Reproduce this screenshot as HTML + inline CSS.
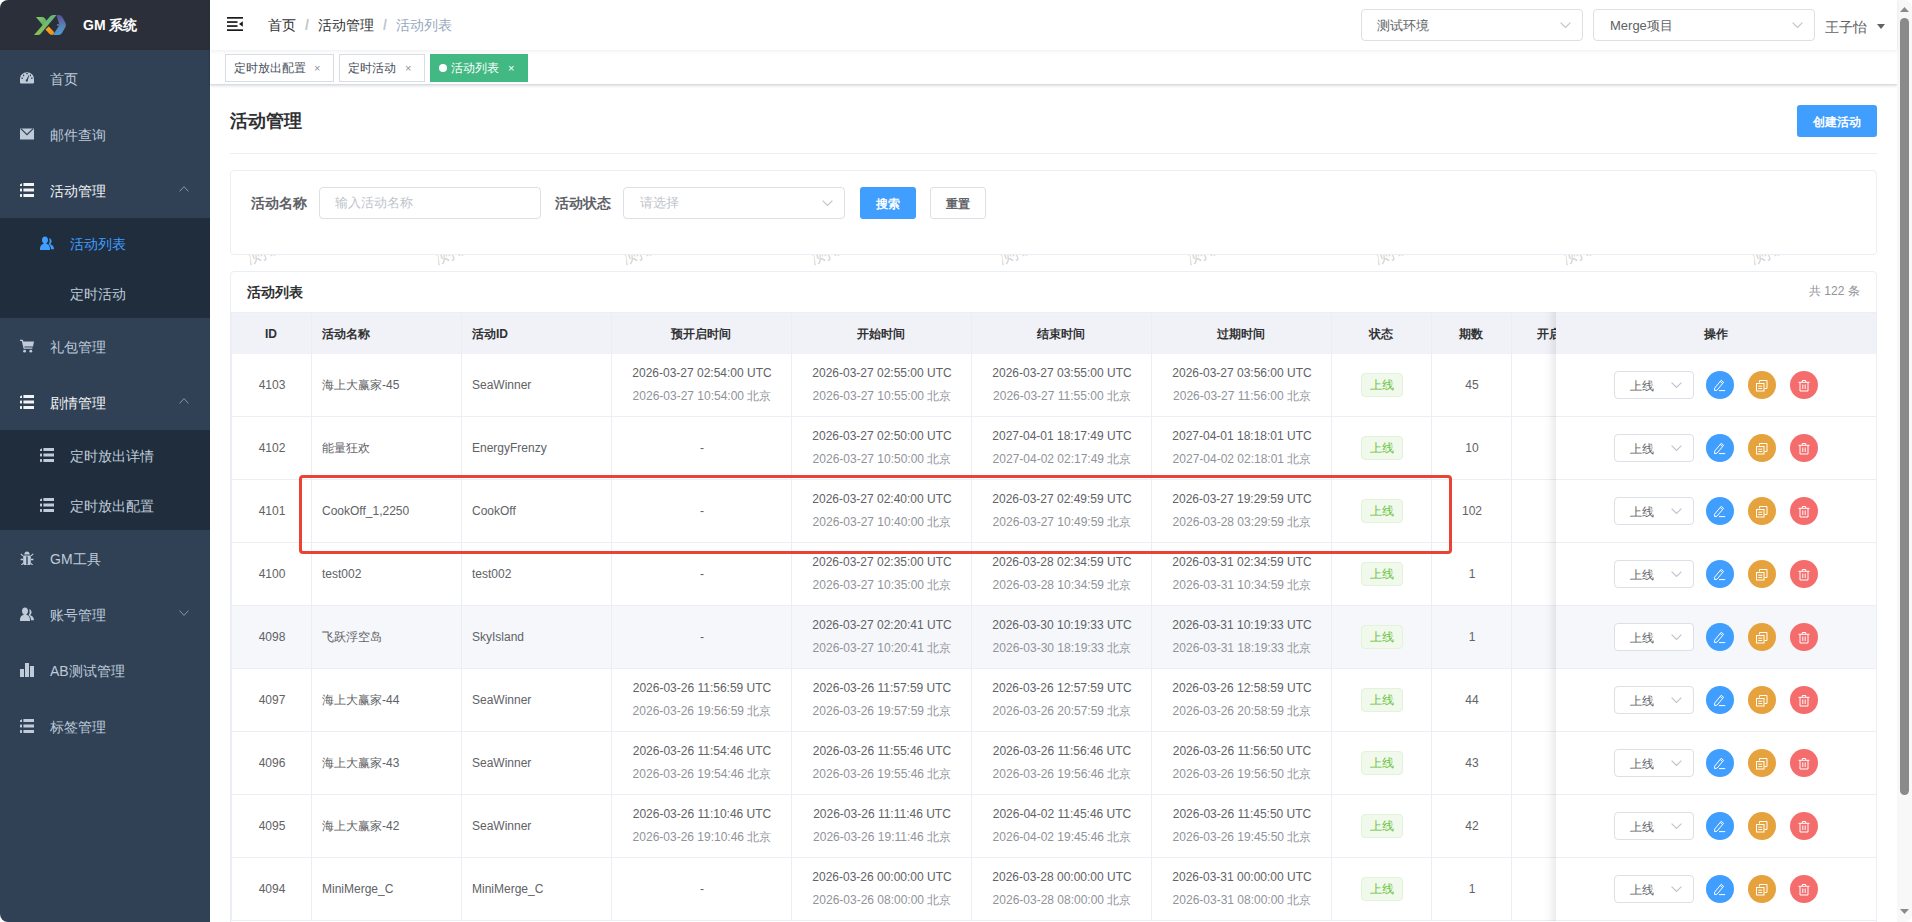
<!DOCTYPE html>
<html><head><meta charset="utf-8">
<style>
*{box-sizing:border-box;margin:0;padding:0}
html,body{width:1912px;height:922px;overflow:hidden;background:#fff}
body{font-family:"Liberation Sans",sans-serif;position:relative;color:#606266}
.abs{position:absolute}
.nw{white-space:nowrap}
#sb{position:absolute;left:0;top:0;width:210px;height:922px;background:#304156;overflow:hidden}
#logo{position:absolute;left:0;top:0;width:210px;height:50px;background:#2b2f3a}
.mi{position:absolute;left:0;width:210px;height:56px;color:#bfcbd9;font-size:14px}
.mi .tx{position:absolute;left:50px;top:1px;line-height:56px;white-space:nowrap}
.mi.sub{height:50px;background:#1f2d3d}
.mi.sub .tx{left:70px;top:1px;line-height:50px}
#nav{position:absolute;left:210px;top:0;width:1687px;height:50px;background:#fff;box-shadow:0 1px 4px rgba(0,21,41,.08);z-index:2}
#tags{position:absolute;left:210px;top:50px;width:1687px;height:35px;background:#fff;border-bottom:1px solid #d8dce5;box-shadow:0 1px 3px 0 rgba(0,0,0,.12),0 0 3px 0 rgba(0,0,0,.04)}
.tag{position:absolute;top:4px;height:28px;line-height:26px;border:1px solid #d8dce5;color:#495060;background:#fff;font-size:12px;padding-left:8px;white-space:nowrap}
.tag .x{position:absolute;top:0;font-size:11px;line-height:26px;color:#909399}
.tag.act{background:#42b983;border-color:#42b983;color:#fff}
.tag.act .x{color:#fff}
.box{position:absolute;border:1px solid #dcdfe6;border-radius:4px;background:#fff}
.card{position:absolute;border:1px solid #ebeef5;border-radius:4px;background:#fff}
.btn{position:absolute;border-radius:3px;font-size:12px;font-weight:bold;text-align:center;line-height:30px}
.th{position:absolute;top:313px;height:42px;line-height:42px;font-size:12px;font-weight:bold;color:#303133;white-space:nowrap}
.cell{position:absolute;font-size:12px;white-space:nowrap;color:#606266}
.l1{color:#606266}
.l2{color:#909399}
.tg{position:absolute;width:42px;height:24px;border:1px solid #e1f3d8;background:#f0f9eb;color:#67c23a;border-radius:4px;font-size:12px;line-height:22px;text-align:center}
.circ{position:absolute;width:28px;height:28px;border-radius:50%}
#sbar{position:absolute;left:1897px;top:0;width:15px;height:922px;background:#f8f8f8}
</style></head>
<body>

<div id="sb">
<div id="logo">
<svg class="abs" style="left:30px;top:10px" width="40" height="30" viewBox="0 0 40 30">
<defs><linearGradient id="lg1" x1="0" y1="1" x2="1" y2="0"><stop offset="0" stop-color="#8cc24a"/><stop offset="1" stop-color="#5fb487"/></linearGradient>
<linearGradient id="lg0" x1="0" y1="0" x2="1" y2="1"><stop offset="0" stop-color="#8cc95e"/><stop offset="1" stop-color="#4fa874"/></linearGradient>
<linearGradient id="lg3" x1="0" y1="0" x2="1" y2="1"><stop offset="0" stop-color="#f6b21c"/><stop offset="1" stop-color="#f0861e"/></linearGradient>
<linearGradient id="lg2" x1="0" y1="0" x2="0" y2="1"><stop offset="0" stop-color="#5a4d9c"/><stop offset="0.5" stop-color="#5a7fb0"/><stop offset="1" stop-color="#4a9ed6"/></linearGradient></defs>
<path d="M6 7 L12.5 7 Q14 7 15 8.5 L17 11.5 L13 15.5 Z" fill="url(#lg0)"/>
<path d="M15.5 19.5 L18.8 16.5 L24 22 Q24.5 22.8 23.5 24 L22.5 25 Q20.5 25 19.5 24 Z" fill="url(#lg3)"/>
<path d="M4 25 L20 6.5 Q21.3 5 23 5 L26.5 5 L10.5 24 Q9.5 25 8 25 Z" fill="url(#lg1)"/>
<path d="M26.5 5 L29 5 Q31 5 32.2 6.8 L35.5 13 Q36.3 15 35.5 17 L32 23 Q30.8 25 28.5 25 L23 25 L29.5 15 Z" fill="url(#lg2)"/>
<rect x="27" y="14.2" width="2.4" height="1.5" fill="#4a8fd0"/>
</svg>
<div class="abs nw" style="left:83px;top:16px;color:#fff;font-weight:bold;font-size:14px;line-height:18px">GM 系统</div>
</div>
<div class="mi" style="top:50px">
<svg class="abs" style="left:20px;top:21px" width="14" height="14" viewBox="0 0 14 14" fill="#bfcbd9"><path d="M7 1.2C3.1 1.2 0 4.3 0 8.2V11.2Q0 12.4 1.2 12.4H12.8Q14 12.4 14 11.2V8.2C14 4.3 10.9 1.2 7 1.2Z"/><g fill="#304156"><rect x="6.2" y="2" width="1.6" height="1.2"/><rect x="3" y="3.6" width="1.2" height="1.6"/><rect x="9.8" y="3.6" width="1.2" height="1.6"/><rect x="1.4" y="6.6" width="1.6" height="1.2"/><rect x="11" y="6.6" width="1.6" height="1.2"/><path d="M6 9.6 L8.6 4.2 L9.2 4.5 L7.6 9.8 Z"/><circle cx="6.8" cy="9.6" r="1.1"/></g></svg>
<div class="tx">首页</div>
</div>
<div class="mi" style="top:106px">
<svg class="abs" style="left:20px;top:21px" width="14" height="14" viewBox="0 0 14 14" fill="#bfcbd9"><path d="M0 1.5H14V12.5H0Z"/><path d="M0.8 1.6 L7 7.6 L13.2 1.6" fill="none" stroke="#304156" stroke-width="1.2"/></svg>
<div class="tx">邮件查询</div>
</div>
<div class="mi" style="top:162px">
<svg class="abs" style="left:20px;top:21px" width="14" height="14" viewBox="0 0 14 14" fill="#f4f4f5"><path d="M0 1.5 L2 0.2 V3 H0Z"/><rect x="3.4" y="0" width="10.6" height="3"/><rect x="0" y="5.6" width="2" height="2.8"/><rect x="3.4" y="5.5" width="10.6" height="3"/><rect x="0" y="11.1" width="2" height="2.8"/><rect x="3.4" y="11" width="10.6" height="3"/></svg>
<div class="tx" style="color:#f4f4f5">活动管理</div>
<svg class="abs" style="left:179px;top:24px" width="10" height="6" viewBox="0 0 10 6"><path d="M0.6 5.4 L5.0 0.6 L9.4 5.4" fill="none" stroke="#8b97a6" stroke-width="1"/></svg>
</div>
<div class="mi sub" style="top:218px">
<svg class="abs" style="left:40px;top:18px" width="14" height="14" viewBox="0 0 14 14" fill="#409eff"><path d="M5 0.5C3.2 0.5 2 2 2 4C2 5.6 2.8 7 4 7.6C1.6 8.2 0 10 0 12.5V14H10V12.5C10 10 8.4 8.2 6 7.6C7.2 7 8 5.6 8 4C8 2 6.8 0.5 5 0.5Z"/><path d="M9.2 2.2C10.6 2.4 11.6 3.6 11.6 5.2C11.6 6.6 10.8 7.6 9.8 8C12.2 8.6 14 10.4 14 13.2H11C11 10.6 9.8 8.8 8.4 8.2C9.2 7.4 9.6 6.2 9.6 5C9.6 4 9.4 3 9.2 2.2Z"/></svg>
<div class="tx" style="color:#409eff">活动列表</div>
</div>
<div class="mi sub" style="top:268px">
<div class="tx">定时活动</div>
</div>
<div class="mi" style="top:318px">
<svg class="abs" style="left:20px;top:21px" width="14" height="14" viewBox="0 0 14 14" fill="#bfcbd9"><path d="M0 0.8H2.8L3.4 2.4H14L13 7.6H4.2L4.5 8.6H12.4V9.8H3.6L1.8 2H0Z"/><circle cx="4.6" cy="12.2" r="1.4"/><circle cx="10.8" cy="12.2" r="1.4"/></svg>
<div class="tx">礼包管理</div>
</div>
<div class="mi" style="top:374px">
<svg class="abs" style="left:20px;top:21px" width="14" height="14" viewBox="0 0 14 14" fill="#f4f4f5"><path d="M0 1.5 L2 0.2 V3 H0Z"/><rect x="3.4" y="0" width="10.6" height="3"/><rect x="0" y="5.6" width="2" height="2.8"/><rect x="3.4" y="5.5" width="10.6" height="3"/><rect x="0" y="11.1" width="2" height="2.8"/><rect x="3.4" y="11" width="10.6" height="3"/></svg>
<div class="tx" style="color:#f4f4f5">剧情管理</div>
<svg class="abs" style="left:179px;top:24px" width="10" height="6" viewBox="0 0 10 6"><path d="M0.6 5.4 L5.0 0.6 L9.4 5.4" fill="none" stroke="#8b97a6" stroke-width="1"/></svg>
</div>
<div class="mi sub" style="top:430px">
<svg class="abs" style="left:40px;top:18px" width="14" height="14" viewBox="0 0 14 14" fill="#bfcbd9"><path d="M0 1.5 L2 0.2 V3 H0Z"/><rect x="3.4" y="0" width="10.6" height="3"/><rect x="0" y="5.6" width="2" height="2.8"/><rect x="3.4" y="5.5" width="10.6" height="3"/><rect x="0" y="11.1" width="2" height="2.8"/><rect x="3.4" y="11" width="10.6" height="3"/></svg>
<div class="tx">定时放出详情</div>
</div>
<div class="mi sub" style="top:480px">
<svg class="abs" style="left:40px;top:18px" width="14" height="14" viewBox="0 0 14 14" fill="#bfcbd9"><path d="M0 1.5 L2 0.2 V3 H0Z"/><rect x="3.4" y="0" width="10.6" height="3"/><rect x="0" y="5.6" width="2" height="2.8"/><rect x="3.4" y="5.5" width="10.6" height="3"/><rect x="0" y="11.1" width="2" height="2.8"/><rect x="3.4" y="11" width="10.6" height="3"/></svg>
<div class="tx">定时放出配置</div>
</div>
<div class="mi" style="top:530px">
<svg class="abs" style="left:20px;top:21px" width="14" height="14" viewBox="0 0 14 14" fill="#bfcbd9"><path d="M4.2 3.6C4.4 1.6 5.6 0.6 7 0.6C8.4 0.6 9.6 1.6 9.8 3.6Z"/><path d="M3.2 4.4H10.8V12.4C10.8 13.2 10 14 9.2 14H4.8C4 14 3.2 13.2 3.2 12.4Z"/><rect x="6.3" y="5.4" width="1.4" height="8.2" fill="#304156"/><path d="M0.6 7.8H3.2V9.2H0.6ZM10.8 7.8H13.4V9.2H10.8Z"/><path d="M1.2 2.4L3.4 4.4L2.6 5.2L0.4 3.2ZM12.8 2.4L10.6 4.4L11.4 5.2L13.6 3.2Z"/><path d="M1 13.6L3.4 11.6L3.6 12.8L1.8 14.4ZM13 13.6L10.6 11.6L10.4 12.8L12.2 14.4Z"/></svg>
<div class="tx">GM工具</div>
</div>
<div class="mi" style="top:586px">
<svg class="abs" style="left:20px;top:21px" width="14" height="14" viewBox="0 0 14 14" fill="#bfcbd9"><path d="M5 0.5C3.2 0.5 2 2 2 4C2 5.6 2.8 7 4 7.6C1.6 8.2 0 10 0 12.5V14H10V12.5C10 10 8.4 8.2 6 7.6C7.2 7 8 5.6 8 4C8 2 6.8 0.5 5 0.5Z"/><path d="M9.2 2.2C10.6 2.4 11.6 3.6 11.6 5.2C11.6 6.6 10.8 7.6 9.8 8C12.2 8.6 14 10.4 14 13.2H11C11 10.6 9.8 8.8 8.4 8.2C9.2 7.4 9.6 6.2 9.6 5C9.6 4 9.4 3 9.2 2.2Z"/></svg>
<div class="tx">账号管理</div>
<svg class="abs" style="left:179px;top:24px" width="10" height="6" viewBox="0 0 10 6"><path d="M0.6 0.6 L5.0 5.4 L9.4 0.6" fill="none" stroke="#8b97a6" stroke-width="1"/></svg>
</div>
<div class="mi" style="top:642px">
<svg class="abs" style="left:20px;top:21px" width="14" height="14" viewBox="0 0 14 14" fill="#bfcbd9"><rect x="0" y="6" width="4" height="8"/><rect x="5" y="0" width="4" height="14"/><rect x="10" y="3" width="4" height="11"/></svg>
<div class="tx">AB测试管理</div>
</div>
<div class="mi" style="top:698px">
<svg class="abs" style="left:20px;top:21px" width="14" height="14" viewBox="0 0 14 14" fill="#bfcbd9"><path d="M0 1.5 L2 0.2 V3 H0Z"/><rect x="3.4" y="0" width="10.6" height="3"/><rect x="0" y="5.6" width="2" height="2.8"/><rect x="3.4" y="5.5" width="10.6" height="3"/><rect x="0" y="11.1" width="2" height="2.8"/><rect x="3.4" y="11" width="10.6" height="3"/></svg>
<div class="tx">标签管理</div>
</div>
</div>
<div id="nav">
<svg class="abs" style="left:17px;top:17px" width="16" height="14" viewBox="0 0 16 14" fill="#1a1a1a">
<rect x="0" y="0" width="16" height="1.7"/><rect x="0" y="4.2" width="10.5" height="1.7"/><rect x="0" y="8.2" width="10.5" height="1.7"/><rect x="0" y="12.3" width="16" height="1.7"/>
<path d="M15.8 4.2V9.8L12 7Z"/></svg>
<div class="abs nw" style="left:58px;top:16px;font-size:14px;line-height:18px;color:#303133">首页<span style="color:#c0c4cc;margin:0 9px 0 9px;font-weight:bold">/</span>活动管理<span style="color:#c0c4cc;margin:0 9px;font-weight:bold">/</span><span style="color:#97a8be">活动列表</span></div>
</div>
<div class="abs" style="left:0;top:0;z-index:3">
<div class="box" style="left:1361px;top:9px;width:222px;height:32px"></div>
<div class="abs nw" style="left:1377px;top:18px;font-size:13px;line-height:16px;color:#606266">测试环境</div>
<svg class="abs" style="left:1560px;top:22px" width="11" height="6" viewBox="0 0 11 6"><path d="M0.6 0.6 L5.5 5.4 L10.4 0.6" fill="none" stroke="#c0c4cc" stroke-width="1.2"/></svg>
<div class="box" style="left:1593px;top:9px;width:222px;height:32px"></div>
<div class="abs nw" style="left:1610px;top:18px;font-size:13px;line-height:16px;color:#606266">Merge项目</div>
<svg class="abs" style="left:1792px;top:22px" width="11" height="6" viewBox="0 0 11 6"><path d="M0.6 0.6 L5.5 5.4 L10.4 0.6" fill="none" stroke="#c0c4cc" stroke-width="1.2"/></svg>
<div class="abs nw" style="left:1825px;top:18px;font-size:14px;line-height:18px;color:#606266">王子怡</div>
<svg class="abs" style="left:1877px;top:24px" width="8" height="5" viewBox="0 0 8 5"><path d="M0 0H8L4 5Z" fill="#606266"/></svg>
</div>
<div id="tags">
<div class="tag" style="left:15px;width:109px">定时放出配置<span class="x" style="left:88px">×</span></div>
<div class="tag" style="left:129px;width:86px">定时活动<span class="x" style="left:65px">×</span></div>
<div class="tag act" style="left:220px;width:98px;padding-left:0"><span class="abs" style="left:8px;top:9px;width:8px;height:8px;border-radius:50%;background:#fff"></span><span class="abs" style="left:20px;top:0">活动列表</span><span class="x" style="left:77px">×</span></div>
</div>
<div class="abs nw" style="left:230px;top:109px;font-size:18px;line-height:24px;font-weight:bold;color:#303133">活动管理</div>
<div class="btn" style="left:1797px;top:105px;width:80px;height:32px;background:#409eff;color:#fff;line-height:34px">创建活动</div>
<div class="abs" style="left:230px;top:153px;width:1647px;height:1px;background:#ebeef5"></div>
<div class="abs nw" style="left:243px;top:247px;font-size:20px;line-height:22px;color:rgba(0,0,0,.18);transform:rotate(-20deg);transform-origin:0 0">测试</div>
<div class="abs nw" style="left:431px;top:247px;font-size:20px;line-height:22px;color:rgba(0,0,0,.18);transform:rotate(-20deg);transform-origin:0 0">测试</div>
<div class="abs nw" style="left:619px;top:247px;font-size:20px;line-height:22px;color:rgba(0,0,0,.18);transform:rotate(-20deg);transform-origin:0 0">测试</div>
<div class="abs nw" style="left:807px;top:247px;font-size:20px;line-height:22px;color:rgba(0,0,0,.18);transform:rotate(-20deg);transform-origin:0 0">测试</div>
<div class="abs nw" style="left:995px;top:247px;font-size:20px;line-height:22px;color:rgba(0,0,0,.18);transform:rotate(-20deg);transform-origin:0 0">测试</div>
<div class="abs nw" style="left:1183px;top:247px;font-size:20px;line-height:22px;color:rgba(0,0,0,.18);transform:rotate(-20deg);transform-origin:0 0">测试</div>
<div class="abs nw" style="left:1371px;top:247px;font-size:20px;line-height:22px;color:rgba(0,0,0,.18);transform:rotate(-20deg);transform-origin:0 0">测试</div>
<div class="abs nw" style="left:1559px;top:247px;font-size:20px;line-height:22px;color:rgba(0,0,0,.18);transform:rotate(-20deg);transform-origin:0 0">测试</div>
<div class="abs nw" style="left:1747px;top:247px;font-size:20px;line-height:22px;color:rgba(0,0,0,.18);transform:rotate(-20deg);transform-origin:0 0">测试</div>
<div class="card" style="left:230px;top:170px;width:1647px;height:85px"></div>
<div class="abs nw" style="left:251px;top:195px;font-size:14px;line-height:16px;font-weight:bold;color:#606266">活动名称</div>
<div class="box" style="left:319px;top:187px;width:222px;height:32px"></div>
<div class="abs nw" style="left:335px;top:196px;font-size:13px;line-height:14px;color:#c0c4cc">输入活动名称</div>
<div class="abs nw" style="left:555px;top:195px;font-size:14px;line-height:16px;font-weight:bold;color:#606266">活动状态</div>
<div class="box" style="left:623px;top:187px;width:222px;height:32px"></div>
<div class="abs nw" style="left:640px;top:196px;font-size:13px;line-height:14px;color:#c0c4cc">请选择</div>
<svg class="abs" style="left:822px;top:200px" width="11" height="6" viewBox="0 0 11 6"><path d="M0.6 0.6 L5.5 5.4 L10.4 0.6" fill="none" stroke="#c0c4cc" stroke-width="1.2"/></svg>
<div class="btn" style="left:860px;top:187px;width:56px;height:32px;background:#409eff;color:#fff;line-height:34px">搜索</div>
<div class="btn" style="left:930px;top:187px;width:56px;height:32px;background:#fff;border:1px solid #dcdfe6;color:#606266;line-height:32px">重置</div>
<div class="card" style="left:230px;top:271px;width:1647px;height:700px"></div>
<div class="abs nw" style="left:247px;top:284px;font-size:14px;line-height:16px;font-weight:bold;color:#303133">活动列表</div>
<div class="abs nw" style="left:1809px;top:283px;font-size:12px;line-height:16px;color:#909399">共 122 条</div>
<div class="abs" style="left:231px;top:312px;width:1645px;height:42px;background:#f0f2f7;border-top:1px solid #ebeef5"></div>
<div class="abs" style="left:231px;top:416px;width:1645px;height:1px;background:#ebeef5"></div>
<div class="abs" style="left:231px;top:479px;width:1645px;height:1px;background:#ebeef5"></div>
<div class="abs" style="left:231px;top:542px;width:1645px;height:1px;background:#ebeef5"></div>
<div class="abs" style="left:231px;top:605px;width:1645px;height:1px;background:#ebeef5"></div>
<div class="abs" style="left:231px;top:606px;width:1645px;height:62px;background:#f5f7fa"></div>
<div class="abs" style="left:231px;top:668px;width:1645px;height:1px;background:#ebeef5"></div>
<div class="abs" style="left:231px;top:731px;width:1645px;height:1px;background:#ebeef5"></div>
<div class="abs" style="left:231px;top:794px;width:1645px;height:1px;background:#ebeef5"></div>
<div class="abs" style="left:231px;top:857px;width:1645px;height:1px;background:#ebeef5"></div>
<div class="abs" style="left:231px;top:920px;width:1645px;height:1px;background:#ebeef5"></div>
<div class="abs" style="left:231px;top:312px;width:1px;height:609px;background:#ebeef5"></div>
<div class="abs" style="left:311px;top:312px;width:1px;height:609px;background:#ebeef5"></div>
<div class="abs" style="left:461px;top:312px;width:1px;height:609px;background:#ebeef5"></div>
<div class="abs" style="left:611px;top:312px;width:1px;height:609px;background:#ebeef5"></div>
<div class="abs" style="left:791px;top:312px;width:1px;height:609px;background:#ebeef5"></div>
<div class="abs" style="left:971px;top:312px;width:1px;height:609px;background:#ebeef5"></div>
<div class="abs" style="left:1151px;top:312px;width:1px;height:609px;background:#ebeef5"></div>
<div class="abs" style="left:1331px;top:312px;width:1px;height:609px;background:#ebeef5"></div>
<div class="abs" style="left:1431px;top:312px;width:1px;height:609px;background:#ebeef5"></div>
<div class="abs" style="left:1511px;top:312px;width:1px;height:609px;background:#ebeef5"></div>
<div class="th" style="left:231px;width:80px;text-align:center">ID</div>
<div class="th" style="left:322px">活动名称</div>
<div class="th" style="left:472px">活动ID</div>
<div class="th" style="left:611px;width:180px;text-align:center">预开启时间</div>
<div class="th" style="left:791px;width:180px;text-align:center">开始时间</div>
<div class="th" style="left:971px;width:180px;text-align:center">结束时间</div>
<div class="th" style="left:1151px;width:180px;text-align:center">过期时间</div>
<div class="th" style="left:1331px;width:100px;text-align:center">状态</div>
<div class="th" style="left:1431px;width:80px;text-align:center">期数</div>
<div class="th" style="left:1537px">开启时间</div>
<div class="cell" style="left:232px;top:354px;width:80px;line-height:62px;text-align:center">4103</div>
<div class="cell" style="left:322px;top:354px;line-height:62px">海上大赢家-45</div>
<div class="cell" style="left:472px;top:354px;line-height:62px">SeaWinner</div>
<div class="cell l1" style="left:612px;top:362px;width:180px;line-height:23px;text-align:center">2026-03-27 02:54:00 UTC</div>
<div class="cell l2" style="left:612px;top:385px;width:180px;line-height:23px;text-align:center">2026-03-27 10:54:00 北京</div>
<div class="cell l1" style="left:792px;top:362px;width:180px;line-height:23px;text-align:center">2026-03-27 02:55:00 UTC</div>
<div class="cell l2" style="left:792px;top:385px;width:180px;line-height:23px;text-align:center">2026-03-27 10:55:00 北京</div>
<div class="cell l1" style="left:972px;top:362px;width:180px;line-height:23px;text-align:center">2026-03-27 03:55:00 UTC</div>
<div class="cell l2" style="left:972px;top:385px;width:180px;line-height:23px;text-align:center">2026-03-27 11:55:00 北京</div>
<div class="cell l1" style="left:1152px;top:362px;width:180px;line-height:23px;text-align:center">2026-03-27 03:56:00 UTC</div>
<div class="cell l2" style="left:1152px;top:385px;width:180px;line-height:23px;text-align:center">2026-03-27 11:56:00 北京</div>
<div class="tg" style="left:1361px;top:373px">上线</div>
<div class="cell" style="left:1432px;top:354px;width:80px;line-height:62px;text-align:center">45</div>
<div class="cell" style="left:232px;top:417px;width:80px;line-height:62px;text-align:center">4102</div>
<div class="cell" style="left:322px;top:417px;line-height:62px">能量狂欢</div>
<div class="cell" style="left:472px;top:417px;line-height:62px">EnergyFrenzy</div>
<div class="cell" style="left:612px;top:417px;width:180px;height:62px;line-height:62px;text-align:center">-</div>
<div class="cell l1" style="left:792px;top:425px;width:180px;line-height:23px;text-align:center">2026-03-27 02:50:00 UTC</div>
<div class="cell l2" style="left:792px;top:448px;width:180px;line-height:23px;text-align:center">2026-03-27 10:50:00 北京</div>
<div class="cell l1" style="left:972px;top:425px;width:180px;line-height:23px;text-align:center">2027-04-01 18:17:49 UTC</div>
<div class="cell l2" style="left:972px;top:448px;width:180px;line-height:23px;text-align:center">2027-04-02 02:17:49 北京</div>
<div class="cell l1" style="left:1152px;top:425px;width:180px;line-height:23px;text-align:center">2027-04-01 18:18:01 UTC</div>
<div class="cell l2" style="left:1152px;top:448px;width:180px;line-height:23px;text-align:center">2027-04-02 02:18:01 北京</div>
<div class="tg" style="left:1361px;top:436px">上线</div>
<div class="cell" style="left:1432px;top:417px;width:80px;line-height:62px;text-align:center">10</div>
<div class="cell" style="left:232px;top:480px;width:80px;line-height:62px;text-align:center">4101</div>
<div class="cell" style="left:322px;top:480px;line-height:62px">CookOff_1,2250</div>
<div class="cell" style="left:472px;top:480px;line-height:62px">CookOff</div>
<div class="cell" style="left:612px;top:480px;width:180px;height:62px;line-height:62px;text-align:center">-</div>
<div class="cell l1" style="left:792px;top:488px;width:180px;line-height:23px;text-align:center">2026-03-27 02:40:00 UTC</div>
<div class="cell l2" style="left:792px;top:511px;width:180px;line-height:23px;text-align:center">2026-03-27 10:40:00 北京</div>
<div class="cell l1" style="left:972px;top:488px;width:180px;line-height:23px;text-align:center">2026-03-27 02:49:59 UTC</div>
<div class="cell l2" style="left:972px;top:511px;width:180px;line-height:23px;text-align:center">2026-03-27 10:49:59 北京</div>
<div class="cell l1" style="left:1152px;top:488px;width:180px;line-height:23px;text-align:center">2026-03-27 19:29:59 UTC</div>
<div class="cell l2" style="left:1152px;top:511px;width:180px;line-height:23px;text-align:center">2026-03-28 03:29:59 北京</div>
<div class="tg" style="left:1361px;top:499px">上线</div>
<div class="cell" style="left:1432px;top:480px;width:80px;line-height:62px;text-align:center">102</div>
<div class="cell" style="left:232px;top:543px;width:80px;line-height:62px;text-align:center">4100</div>
<div class="cell" style="left:322px;top:543px;line-height:62px">test002</div>
<div class="cell" style="left:472px;top:543px;line-height:62px">test002</div>
<div class="cell" style="left:612px;top:543px;width:180px;height:62px;line-height:62px;text-align:center">-</div>
<div class="cell l1" style="left:792px;top:551px;width:180px;line-height:23px;text-align:center">2026-03-27 02:35:00 UTC</div>
<div class="cell l2" style="left:792px;top:574px;width:180px;line-height:23px;text-align:center">2026-03-27 10:35:00 北京</div>
<div class="cell l1" style="left:972px;top:551px;width:180px;line-height:23px;text-align:center">2026-03-28 02:34:59 UTC</div>
<div class="cell l2" style="left:972px;top:574px;width:180px;line-height:23px;text-align:center">2026-03-28 10:34:59 北京</div>
<div class="cell l1" style="left:1152px;top:551px;width:180px;line-height:23px;text-align:center">2026-03-31 02:34:59 UTC</div>
<div class="cell l2" style="left:1152px;top:574px;width:180px;line-height:23px;text-align:center">2026-03-31 10:34:59 北京</div>
<div class="tg" style="left:1361px;top:562px">上线</div>
<div class="cell" style="left:1432px;top:543px;width:80px;line-height:62px;text-align:center">1</div>
<div class="cell" style="left:232px;top:606px;width:80px;line-height:62px;text-align:center">4098</div>
<div class="cell" style="left:322px;top:606px;line-height:62px">飞跃浮空岛</div>
<div class="cell" style="left:472px;top:606px;line-height:62px">SkyIsland</div>
<div class="cell" style="left:612px;top:606px;width:180px;height:62px;line-height:62px;text-align:center">-</div>
<div class="cell l1" style="left:792px;top:614px;width:180px;line-height:23px;text-align:center">2026-03-27 02:20:41 UTC</div>
<div class="cell l2" style="left:792px;top:637px;width:180px;line-height:23px;text-align:center">2026-03-27 10:20:41 北京</div>
<div class="cell l1" style="left:972px;top:614px;width:180px;line-height:23px;text-align:center">2026-03-30 10:19:33 UTC</div>
<div class="cell l2" style="left:972px;top:637px;width:180px;line-height:23px;text-align:center">2026-03-30 18:19:33 北京</div>
<div class="cell l1" style="left:1152px;top:614px;width:180px;line-height:23px;text-align:center">2026-03-31 10:19:33 UTC</div>
<div class="cell l2" style="left:1152px;top:637px;width:180px;line-height:23px;text-align:center">2026-03-31 18:19:33 北京</div>
<div class="tg" style="left:1361px;top:625px">上线</div>
<div class="cell" style="left:1432px;top:606px;width:80px;line-height:62px;text-align:center">1</div>
<div class="cell" style="left:232px;top:669px;width:80px;line-height:62px;text-align:center">4097</div>
<div class="cell" style="left:322px;top:669px;line-height:62px">海上大赢家-44</div>
<div class="cell" style="left:472px;top:669px;line-height:62px">SeaWinner</div>
<div class="cell l1" style="left:612px;top:677px;width:180px;line-height:23px;text-align:center">2026-03-26 11:56:59 UTC</div>
<div class="cell l2" style="left:612px;top:700px;width:180px;line-height:23px;text-align:center">2026-03-26 19:56:59 北京</div>
<div class="cell l1" style="left:792px;top:677px;width:180px;line-height:23px;text-align:center">2026-03-26 11:57:59 UTC</div>
<div class="cell l2" style="left:792px;top:700px;width:180px;line-height:23px;text-align:center">2026-03-26 19:57:59 北京</div>
<div class="cell l1" style="left:972px;top:677px;width:180px;line-height:23px;text-align:center">2026-03-26 12:57:59 UTC</div>
<div class="cell l2" style="left:972px;top:700px;width:180px;line-height:23px;text-align:center">2026-03-26 20:57:59 北京</div>
<div class="cell l1" style="left:1152px;top:677px;width:180px;line-height:23px;text-align:center">2026-03-26 12:58:59 UTC</div>
<div class="cell l2" style="left:1152px;top:700px;width:180px;line-height:23px;text-align:center">2026-03-26 20:58:59 北京</div>
<div class="tg" style="left:1361px;top:688px">上线</div>
<div class="cell" style="left:1432px;top:669px;width:80px;line-height:62px;text-align:center">44</div>
<div class="cell" style="left:232px;top:732px;width:80px;line-height:62px;text-align:center">4096</div>
<div class="cell" style="left:322px;top:732px;line-height:62px">海上大赢家-43</div>
<div class="cell" style="left:472px;top:732px;line-height:62px">SeaWinner</div>
<div class="cell l1" style="left:612px;top:740px;width:180px;line-height:23px;text-align:center">2026-03-26 11:54:46 UTC</div>
<div class="cell l2" style="left:612px;top:763px;width:180px;line-height:23px;text-align:center">2026-03-26 19:54:46 北京</div>
<div class="cell l1" style="left:792px;top:740px;width:180px;line-height:23px;text-align:center">2026-03-26 11:55:46 UTC</div>
<div class="cell l2" style="left:792px;top:763px;width:180px;line-height:23px;text-align:center">2026-03-26 19:55:46 北京</div>
<div class="cell l1" style="left:972px;top:740px;width:180px;line-height:23px;text-align:center">2026-03-26 11:56:46 UTC</div>
<div class="cell l2" style="left:972px;top:763px;width:180px;line-height:23px;text-align:center">2026-03-26 19:56:46 北京</div>
<div class="cell l1" style="left:1152px;top:740px;width:180px;line-height:23px;text-align:center">2026-03-26 11:56:50 UTC</div>
<div class="cell l2" style="left:1152px;top:763px;width:180px;line-height:23px;text-align:center">2026-03-26 19:56:50 北京</div>
<div class="tg" style="left:1361px;top:751px">上线</div>
<div class="cell" style="left:1432px;top:732px;width:80px;line-height:62px;text-align:center">43</div>
<div class="cell" style="left:232px;top:795px;width:80px;line-height:62px;text-align:center">4095</div>
<div class="cell" style="left:322px;top:795px;line-height:62px">海上大赢家-42</div>
<div class="cell" style="left:472px;top:795px;line-height:62px">SeaWinner</div>
<div class="cell l1" style="left:612px;top:803px;width:180px;line-height:23px;text-align:center">2026-03-26 11:10:46 UTC</div>
<div class="cell l2" style="left:612px;top:826px;width:180px;line-height:23px;text-align:center">2026-03-26 19:10:46 北京</div>
<div class="cell l1" style="left:792px;top:803px;width:180px;line-height:23px;text-align:center">2026-03-26 11:11:46 UTC</div>
<div class="cell l2" style="left:792px;top:826px;width:180px;line-height:23px;text-align:center">2026-03-26 19:11:46 北京</div>
<div class="cell l1" style="left:972px;top:803px;width:180px;line-height:23px;text-align:center">2026-04-02 11:45:46 UTC</div>
<div class="cell l2" style="left:972px;top:826px;width:180px;line-height:23px;text-align:center">2026-04-02 19:45:46 北京</div>
<div class="cell l1" style="left:1152px;top:803px;width:180px;line-height:23px;text-align:center">2026-03-26 11:45:50 UTC</div>
<div class="cell l2" style="left:1152px;top:826px;width:180px;line-height:23px;text-align:center">2026-03-26 19:45:50 北京</div>
<div class="tg" style="left:1361px;top:814px">上线</div>
<div class="cell" style="left:1432px;top:795px;width:80px;line-height:62px;text-align:center">42</div>
<div class="cell" style="left:232px;top:858px;width:80px;line-height:62px;text-align:center">4094</div>
<div class="cell" style="left:322px;top:858px;line-height:62px">MiniMerge_C</div>
<div class="cell" style="left:472px;top:858px;line-height:62px">MiniMerge_C</div>
<div class="cell" style="left:612px;top:858px;width:180px;height:62px;line-height:62px;text-align:center">-</div>
<div class="cell l1" style="left:792px;top:866px;width:180px;line-height:23px;text-align:center">2026-03-26 00:00:00 UTC</div>
<div class="cell l2" style="left:792px;top:889px;width:180px;line-height:23px;text-align:center">2026-03-26 08:00:00 北京</div>
<div class="cell l1" style="left:972px;top:866px;width:180px;line-height:23px;text-align:center">2026-03-28 00:00:00 UTC</div>
<div class="cell l2" style="left:972px;top:889px;width:180px;line-height:23px;text-align:center">2026-03-28 08:00:00 北京</div>
<div class="cell l1" style="left:1152px;top:866px;width:180px;line-height:23px;text-align:center">2026-03-31 00:00:00 UTC</div>
<div class="cell l2" style="left:1152px;top:889px;width:180px;line-height:23px;text-align:center">2026-03-31 08:00:00 北京</div>
<div class="tg" style="left:1361px;top:877px">上线</div>
<div class="cell" style="left:1432px;top:858px;width:80px;line-height:62px;text-align:center">1</div>
<div class="abs" style="left:1520px;top:312px;width:36px;height:609px;overflow:hidden"><div class="abs" style="left:36px;top:-20px;width:320px;height:649px;box-shadow:-6px 0 10px -4px rgba(0,0,0,.12)"></div></div>
<div class="abs" style="left:1556px;top:312px;width:320px;height:42px;background:#f0f2f7;border-top:1px solid #ebeef5"></div>
<div class="th" style="left:1556px;width:320px;text-align:center">操作</div>
<div class="abs" style="left:1556px;top:354px;width:320px;height:62px;background:#fff"></div>
<div class="abs" style="left:1556px;top:416px;width:320px;height:1px;background:#ebeef5"></div>
<div class="box" style="left:1614px;top:371px;width:80px;height:28px"></div>
<div class="cell" style="left:1630px;top:372px;line-height:28px;color:#606266">上线</div>
<svg class="abs" style="left:1671px;top:382px" width="11" height="6" viewBox="0 0 11 6"><path d="M0.6 0.6 L5.5 5.4 L10.4 0.6" fill="none" stroke="#c0c4cc" stroke-width="1.2"/></svg>
<div class="circ" style="left:1706px;top:371px;background:#409eff"></div>
<svg class="abs" style="left:1713px;top:378px" width="14" height="14" viewBox="0 0 14 14" fill="none" stroke="#fff" stroke-width="1"><path d="M1.6 12.6 L1.6 10.2 L8.2 2.3 L10.6 4.3 L4 12.2 Z"/><path d="M7.2 3.5 L9.6 5.5"/><path d="M6 12.6 H12.2"/></svg>
<div class="circ" style="left:1748px;top:371px;background:#e6a23c"></div>
<svg class="abs" style="left:1755px;top:378px" width="14" height="14" viewBox="0 0 14 14" fill="none" stroke="#fff" stroke-width="1"><path d="M4.5 4.5 V2.5 H12 V10.5 H9.5"/><rect x="1.5" y="5.5" width="7.5" height="7.5" fill="#e6a23c"/><path d="M3.3 8.2 H7.2 M3.3 10.5 H7.2"/></svg>
<div class="circ" style="left:1790px;top:371px;background:#f56c6c"></div>
<svg class="abs" style="left:1797px;top:378px" width="14" height="14" viewBox="0 0 14 14" fill="none" stroke="#fff" stroke-width="1"><path d="M1.5 4.3 H12.5"/><path d="M5.3 4 V2.5 H8.7 V4"/><path d="M3 4.5 V13 H11 V4.5"/><path d="M5.8 6.5 V11 M8.2 6.5 V11"/></svg>
<div class="abs" style="left:1556px;top:417px;width:320px;height:62px;background:#fff"></div>
<div class="abs" style="left:1556px;top:479px;width:320px;height:1px;background:#ebeef5"></div>
<div class="box" style="left:1614px;top:434px;width:80px;height:28px"></div>
<div class="cell" style="left:1630px;top:435px;line-height:28px;color:#606266">上线</div>
<svg class="abs" style="left:1671px;top:445px" width="11" height="6" viewBox="0 0 11 6"><path d="M0.6 0.6 L5.5 5.4 L10.4 0.6" fill="none" stroke="#c0c4cc" stroke-width="1.2"/></svg>
<div class="circ" style="left:1706px;top:434px;background:#409eff"></div>
<svg class="abs" style="left:1713px;top:441px" width="14" height="14" viewBox="0 0 14 14" fill="none" stroke="#fff" stroke-width="1"><path d="M1.6 12.6 L1.6 10.2 L8.2 2.3 L10.6 4.3 L4 12.2 Z"/><path d="M7.2 3.5 L9.6 5.5"/><path d="M6 12.6 H12.2"/></svg>
<div class="circ" style="left:1748px;top:434px;background:#e6a23c"></div>
<svg class="abs" style="left:1755px;top:441px" width="14" height="14" viewBox="0 0 14 14" fill="none" stroke="#fff" stroke-width="1"><path d="M4.5 4.5 V2.5 H12 V10.5 H9.5"/><rect x="1.5" y="5.5" width="7.5" height="7.5" fill="#e6a23c"/><path d="M3.3 8.2 H7.2 M3.3 10.5 H7.2"/></svg>
<div class="circ" style="left:1790px;top:434px;background:#f56c6c"></div>
<svg class="abs" style="left:1797px;top:441px" width="14" height="14" viewBox="0 0 14 14" fill="none" stroke="#fff" stroke-width="1"><path d="M1.5 4.3 H12.5"/><path d="M5.3 4 V2.5 H8.7 V4"/><path d="M3 4.5 V13 H11 V4.5"/><path d="M5.8 6.5 V11 M8.2 6.5 V11"/></svg>
<div class="abs" style="left:1556px;top:480px;width:320px;height:62px;background:#fff"></div>
<div class="abs" style="left:1556px;top:542px;width:320px;height:1px;background:#ebeef5"></div>
<div class="box" style="left:1614px;top:497px;width:80px;height:28px"></div>
<div class="cell" style="left:1630px;top:498px;line-height:28px;color:#606266">上线</div>
<svg class="abs" style="left:1671px;top:508px" width="11" height="6" viewBox="0 0 11 6"><path d="M0.6 0.6 L5.5 5.4 L10.4 0.6" fill="none" stroke="#c0c4cc" stroke-width="1.2"/></svg>
<div class="circ" style="left:1706px;top:497px;background:#409eff"></div>
<svg class="abs" style="left:1713px;top:504px" width="14" height="14" viewBox="0 0 14 14" fill="none" stroke="#fff" stroke-width="1"><path d="M1.6 12.6 L1.6 10.2 L8.2 2.3 L10.6 4.3 L4 12.2 Z"/><path d="M7.2 3.5 L9.6 5.5"/><path d="M6 12.6 H12.2"/></svg>
<div class="circ" style="left:1748px;top:497px;background:#e6a23c"></div>
<svg class="abs" style="left:1755px;top:504px" width="14" height="14" viewBox="0 0 14 14" fill="none" stroke="#fff" stroke-width="1"><path d="M4.5 4.5 V2.5 H12 V10.5 H9.5"/><rect x="1.5" y="5.5" width="7.5" height="7.5" fill="#e6a23c"/><path d="M3.3 8.2 H7.2 M3.3 10.5 H7.2"/></svg>
<div class="circ" style="left:1790px;top:497px;background:#f56c6c"></div>
<svg class="abs" style="left:1797px;top:504px" width="14" height="14" viewBox="0 0 14 14" fill="none" stroke="#fff" stroke-width="1"><path d="M1.5 4.3 H12.5"/><path d="M5.3 4 V2.5 H8.7 V4"/><path d="M3 4.5 V13 H11 V4.5"/><path d="M5.8 6.5 V11 M8.2 6.5 V11"/></svg>
<div class="abs" style="left:1556px;top:543px;width:320px;height:62px;background:#fff"></div>
<div class="abs" style="left:1556px;top:605px;width:320px;height:1px;background:#ebeef5"></div>
<div class="box" style="left:1614px;top:560px;width:80px;height:28px"></div>
<div class="cell" style="left:1630px;top:561px;line-height:28px;color:#606266">上线</div>
<svg class="abs" style="left:1671px;top:571px" width="11" height="6" viewBox="0 0 11 6"><path d="M0.6 0.6 L5.5 5.4 L10.4 0.6" fill="none" stroke="#c0c4cc" stroke-width="1.2"/></svg>
<div class="circ" style="left:1706px;top:560px;background:#409eff"></div>
<svg class="abs" style="left:1713px;top:567px" width="14" height="14" viewBox="0 0 14 14" fill="none" stroke="#fff" stroke-width="1"><path d="M1.6 12.6 L1.6 10.2 L8.2 2.3 L10.6 4.3 L4 12.2 Z"/><path d="M7.2 3.5 L9.6 5.5"/><path d="M6 12.6 H12.2"/></svg>
<div class="circ" style="left:1748px;top:560px;background:#e6a23c"></div>
<svg class="abs" style="left:1755px;top:567px" width="14" height="14" viewBox="0 0 14 14" fill="none" stroke="#fff" stroke-width="1"><path d="M4.5 4.5 V2.5 H12 V10.5 H9.5"/><rect x="1.5" y="5.5" width="7.5" height="7.5" fill="#e6a23c"/><path d="M3.3 8.2 H7.2 M3.3 10.5 H7.2"/></svg>
<div class="circ" style="left:1790px;top:560px;background:#f56c6c"></div>
<svg class="abs" style="left:1797px;top:567px" width="14" height="14" viewBox="0 0 14 14" fill="none" stroke="#fff" stroke-width="1"><path d="M1.5 4.3 H12.5"/><path d="M5.3 4 V2.5 H8.7 V4"/><path d="M3 4.5 V13 H11 V4.5"/><path d="M5.8 6.5 V11 M8.2 6.5 V11"/></svg>
<div class="abs" style="left:1556px;top:606px;width:320px;height:62px;background:#f5f7fa"></div>
<div class="abs" style="left:1556px;top:668px;width:320px;height:1px;background:#ebeef5"></div>
<div class="box" style="left:1614px;top:623px;width:80px;height:28px"></div>
<div class="cell" style="left:1630px;top:624px;line-height:28px;color:#606266">上线</div>
<svg class="abs" style="left:1671px;top:634px" width="11" height="6" viewBox="0 0 11 6"><path d="M0.6 0.6 L5.5 5.4 L10.4 0.6" fill="none" stroke="#c0c4cc" stroke-width="1.2"/></svg>
<div class="circ" style="left:1706px;top:623px;background:#409eff"></div>
<svg class="abs" style="left:1713px;top:630px" width="14" height="14" viewBox="0 0 14 14" fill="none" stroke="#fff" stroke-width="1"><path d="M1.6 12.6 L1.6 10.2 L8.2 2.3 L10.6 4.3 L4 12.2 Z"/><path d="M7.2 3.5 L9.6 5.5"/><path d="M6 12.6 H12.2"/></svg>
<div class="circ" style="left:1748px;top:623px;background:#e6a23c"></div>
<svg class="abs" style="left:1755px;top:630px" width="14" height="14" viewBox="0 0 14 14" fill="none" stroke="#fff" stroke-width="1"><path d="M4.5 4.5 V2.5 H12 V10.5 H9.5"/><rect x="1.5" y="5.5" width="7.5" height="7.5" fill="#e6a23c"/><path d="M3.3 8.2 H7.2 M3.3 10.5 H7.2"/></svg>
<div class="circ" style="left:1790px;top:623px;background:#f56c6c"></div>
<svg class="abs" style="left:1797px;top:630px" width="14" height="14" viewBox="0 0 14 14" fill="none" stroke="#fff" stroke-width="1"><path d="M1.5 4.3 H12.5"/><path d="M5.3 4 V2.5 H8.7 V4"/><path d="M3 4.5 V13 H11 V4.5"/><path d="M5.8 6.5 V11 M8.2 6.5 V11"/></svg>
<div class="abs" style="left:1556px;top:669px;width:320px;height:62px;background:#fff"></div>
<div class="abs" style="left:1556px;top:731px;width:320px;height:1px;background:#ebeef5"></div>
<div class="box" style="left:1614px;top:686px;width:80px;height:28px"></div>
<div class="cell" style="left:1630px;top:687px;line-height:28px;color:#606266">上线</div>
<svg class="abs" style="left:1671px;top:697px" width="11" height="6" viewBox="0 0 11 6"><path d="M0.6 0.6 L5.5 5.4 L10.4 0.6" fill="none" stroke="#c0c4cc" stroke-width="1.2"/></svg>
<div class="circ" style="left:1706px;top:686px;background:#409eff"></div>
<svg class="abs" style="left:1713px;top:693px" width="14" height="14" viewBox="0 0 14 14" fill="none" stroke="#fff" stroke-width="1"><path d="M1.6 12.6 L1.6 10.2 L8.2 2.3 L10.6 4.3 L4 12.2 Z"/><path d="M7.2 3.5 L9.6 5.5"/><path d="M6 12.6 H12.2"/></svg>
<div class="circ" style="left:1748px;top:686px;background:#e6a23c"></div>
<svg class="abs" style="left:1755px;top:693px" width="14" height="14" viewBox="0 0 14 14" fill="none" stroke="#fff" stroke-width="1"><path d="M4.5 4.5 V2.5 H12 V10.5 H9.5"/><rect x="1.5" y="5.5" width="7.5" height="7.5" fill="#e6a23c"/><path d="M3.3 8.2 H7.2 M3.3 10.5 H7.2"/></svg>
<div class="circ" style="left:1790px;top:686px;background:#f56c6c"></div>
<svg class="abs" style="left:1797px;top:693px" width="14" height="14" viewBox="0 0 14 14" fill="none" stroke="#fff" stroke-width="1"><path d="M1.5 4.3 H12.5"/><path d="M5.3 4 V2.5 H8.7 V4"/><path d="M3 4.5 V13 H11 V4.5"/><path d="M5.8 6.5 V11 M8.2 6.5 V11"/></svg>
<div class="abs" style="left:1556px;top:732px;width:320px;height:62px;background:#fff"></div>
<div class="abs" style="left:1556px;top:794px;width:320px;height:1px;background:#ebeef5"></div>
<div class="box" style="left:1614px;top:749px;width:80px;height:28px"></div>
<div class="cell" style="left:1630px;top:750px;line-height:28px;color:#606266">上线</div>
<svg class="abs" style="left:1671px;top:760px" width="11" height="6" viewBox="0 0 11 6"><path d="M0.6 0.6 L5.5 5.4 L10.4 0.6" fill="none" stroke="#c0c4cc" stroke-width="1.2"/></svg>
<div class="circ" style="left:1706px;top:749px;background:#409eff"></div>
<svg class="abs" style="left:1713px;top:756px" width="14" height="14" viewBox="0 0 14 14" fill="none" stroke="#fff" stroke-width="1"><path d="M1.6 12.6 L1.6 10.2 L8.2 2.3 L10.6 4.3 L4 12.2 Z"/><path d="M7.2 3.5 L9.6 5.5"/><path d="M6 12.6 H12.2"/></svg>
<div class="circ" style="left:1748px;top:749px;background:#e6a23c"></div>
<svg class="abs" style="left:1755px;top:756px" width="14" height="14" viewBox="0 0 14 14" fill="none" stroke="#fff" stroke-width="1"><path d="M4.5 4.5 V2.5 H12 V10.5 H9.5"/><rect x="1.5" y="5.5" width="7.5" height="7.5" fill="#e6a23c"/><path d="M3.3 8.2 H7.2 M3.3 10.5 H7.2"/></svg>
<div class="circ" style="left:1790px;top:749px;background:#f56c6c"></div>
<svg class="abs" style="left:1797px;top:756px" width="14" height="14" viewBox="0 0 14 14" fill="none" stroke="#fff" stroke-width="1"><path d="M1.5 4.3 H12.5"/><path d="M5.3 4 V2.5 H8.7 V4"/><path d="M3 4.5 V13 H11 V4.5"/><path d="M5.8 6.5 V11 M8.2 6.5 V11"/></svg>
<div class="abs" style="left:1556px;top:795px;width:320px;height:62px;background:#fff"></div>
<div class="abs" style="left:1556px;top:857px;width:320px;height:1px;background:#ebeef5"></div>
<div class="box" style="left:1614px;top:812px;width:80px;height:28px"></div>
<div class="cell" style="left:1630px;top:813px;line-height:28px;color:#606266">上线</div>
<svg class="abs" style="left:1671px;top:823px" width="11" height="6" viewBox="0 0 11 6"><path d="M0.6 0.6 L5.5 5.4 L10.4 0.6" fill="none" stroke="#c0c4cc" stroke-width="1.2"/></svg>
<div class="circ" style="left:1706px;top:812px;background:#409eff"></div>
<svg class="abs" style="left:1713px;top:819px" width="14" height="14" viewBox="0 0 14 14" fill="none" stroke="#fff" stroke-width="1"><path d="M1.6 12.6 L1.6 10.2 L8.2 2.3 L10.6 4.3 L4 12.2 Z"/><path d="M7.2 3.5 L9.6 5.5"/><path d="M6 12.6 H12.2"/></svg>
<div class="circ" style="left:1748px;top:812px;background:#e6a23c"></div>
<svg class="abs" style="left:1755px;top:819px" width="14" height="14" viewBox="0 0 14 14" fill="none" stroke="#fff" stroke-width="1"><path d="M4.5 4.5 V2.5 H12 V10.5 H9.5"/><rect x="1.5" y="5.5" width="7.5" height="7.5" fill="#e6a23c"/><path d="M3.3 8.2 H7.2 M3.3 10.5 H7.2"/></svg>
<div class="circ" style="left:1790px;top:812px;background:#f56c6c"></div>
<svg class="abs" style="left:1797px;top:819px" width="14" height="14" viewBox="0 0 14 14" fill="none" stroke="#fff" stroke-width="1"><path d="M1.5 4.3 H12.5"/><path d="M5.3 4 V2.5 H8.7 V4"/><path d="M3 4.5 V13 H11 V4.5"/><path d="M5.8 6.5 V11 M8.2 6.5 V11"/></svg>
<div class="abs" style="left:1556px;top:858px;width:320px;height:62px;background:#fff"></div>
<div class="abs" style="left:1556px;top:920px;width:320px;height:1px;background:#ebeef5"></div>
<div class="box" style="left:1614px;top:875px;width:80px;height:28px"></div>
<div class="cell" style="left:1630px;top:876px;line-height:28px;color:#606266">上线</div>
<svg class="abs" style="left:1671px;top:886px" width="11" height="6" viewBox="0 0 11 6"><path d="M0.6 0.6 L5.5 5.4 L10.4 0.6" fill="none" stroke="#c0c4cc" stroke-width="1.2"/></svg>
<div class="circ" style="left:1706px;top:875px;background:#409eff"></div>
<svg class="abs" style="left:1713px;top:882px" width="14" height="14" viewBox="0 0 14 14" fill="none" stroke="#fff" stroke-width="1"><path d="M1.6 12.6 L1.6 10.2 L8.2 2.3 L10.6 4.3 L4 12.2 Z"/><path d="M7.2 3.5 L9.6 5.5"/><path d="M6 12.6 H12.2"/></svg>
<div class="circ" style="left:1748px;top:875px;background:#e6a23c"></div>
<svg class="abs" style="left:1755px;top:882px" width="14" height="14" viewBox="0 0 14 14" fill="none" stroke="#fff" stroke-width="1"><path d="M4.5 4.5 V2.5 H12 V10.5 H9.5"/><rect x="1.5" y="5.5" width="7.5" height="7.5" fill="#e6a23c"/><path d="M3.3 8.2 H7.2 M3.3 10.5 H7.2"/></svg>
<div class="circ" style="left:1790px;top:875px;background:#f56c6c"></div>
<svg class="abs" style="left:1797px;top:882px" width="14" height="14" viewBox="0 0 14 14" fill="none" stroke="#fff" stroke-width="1"><path d="M1.5 4.3 H12.5"/><path d="M5.3 4 V2.5 H8.7 V4"/><path d="M3 4.5 V13 H11 V4.5"/><path d="M5.8 6.5 V11 M8.2 6.5 V11"/></svg>
<div class="abs" style="left:299px;top:475px;width:1153px;height:79px;border:3px solid #ea4335;border-radius:4px"></div>
<div id="sbar">
<svg class="abs" style="left:3px;top:7px" width="9" height="5" viewBox="0 0 9 5"><path d="M0 5H9L4.5 0Z" fill="#8a8a8a"/></svg>
<div class="abs" style="left:3px;top:18px;width:9px;height:777px;border-radius:4.5px;background:#8a8a8a"></div>
<svg class="abs" style="left:3px;top:909px" width="9" height="5" viewBox="0 0 9 5"><path d="M0 0H9L4.5 5Z" fill="#8a8a8a"/></svg>
</div>
<div class="abs" style="left:0;top:0;width:1912px;height:922px;border-radius:8px;box-shadow:0 0 0 30px #fff;pointer-events:none;z-index:10"></div>
</body></html>
